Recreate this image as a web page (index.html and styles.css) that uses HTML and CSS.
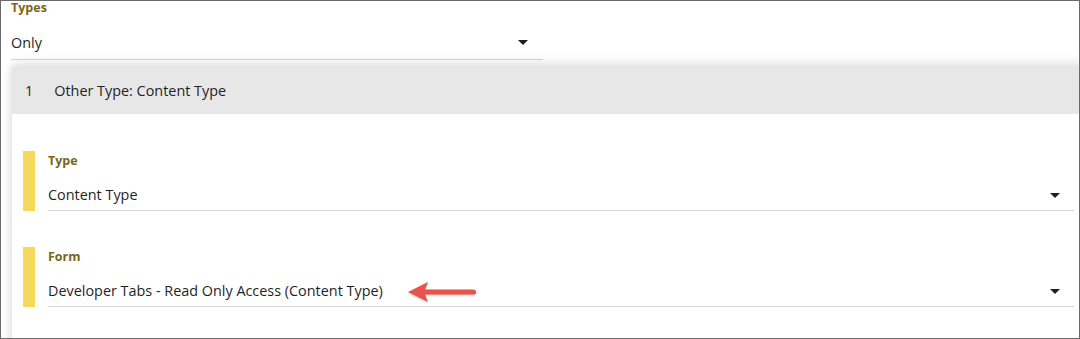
FILE: index.html
```html
<!DOCTYPE html>
<html lang="en">
<head>
<meta charset="utf-8">
<title>Types</title>
<link rel="stylesheet" href="styles.css">
</head>
<body>
<div class="frame">
  <div class="top-field">
    <div class="label">Types</div>
    <div class="value-row top-value">
      <span class="value">Only</span>
      <span class="caret"></span>
    </div>
  </div>

  <div class="card">
    <div class="card-header">
      <span class="num">1</span>
      <span class="title">Other Type: Content Type</span>
    </div>
    <div class="card-body">
      <div class="field">
        <div class="bar"></div>
        <div class="field-content">
          <div class="label">Type</div>
          <div class="value-row">
            <span class="value">Content Type</span>
            <span class="caret"></span>
          </div>
        </div>
      </div>
      <div class="field">
        <div class="bar"></div>
        <div class="field-content">
          <div class="label">Form</div>
          <div class="value-row">
            <span class="value">Developer Tabs - Read Only Access (Content Type)</span>
            <svg class="callout" width="72" height="24" viewBox="0 0 72 24" aria-hidden="true">
              <path d="M2 12 L22 2 L19 9.4 L67 9.4 Q70 9.4 70 12 Q70 14.6 67 14.6 L19 14.6 L22 22 Z" fill="#e9544a"/>
            </svg>
            <span class="caret"></span>
          </div>
        </div>
      </div>
    </div>
  </div>
</div>
</body>
</html>
```

FILE: styles.css
```css
* {
  box-sizing: border-box;
}

html, body {
  margin: 0;
  padding: 0;
  background: #ffffff;
}

body {
  font-family: "Open Sans", "Noto Sans", "Liberation Sans", sans-serif;
  color: #1f1f1f;
}

.frame {
  width: 1080px;
  height: 339px;
  border: 1px solid #6a6a6a;
  overflow: hidden;
  padding: 0 0 0 10px;
  background: #ffffff;
}

.label {
  font-size: 12.5px;
  font-weight: 700;
  line-height: 16px;
  color: #7a6616;
}

.top-field {
  width: 532px;
}

.top-field .label {
  line-height: 14px;
}

.value-row {
  display: flex;
  align-items: center;
  height: 27px;
  padding: 0 14px 7px 0;
  border-bottom: 1px solid #d4d4d4;
}

.top-value {
  margin-top: 18px;
  padding-right: 15px;
  height: 27px;
}

.value {
  font-size: 14.4px;
  line-height: 20px;
  white-space: nowrap;
}

.caret {
  margin-left: auto;
  width: 0;
  height: 0;
  border-left: 5px solid transparent;
  border-right: 5px solid transparent;
  border-top: 5px solid #1e1e1e;
}

.callout {
  margin-left: 23px;
  margin-top: 1px;
  filter: drop-shadow(0 1px 1px rgba(0, 0, 0, 0.25));
}

.card {
  width: 1073px;
  margin: 7px 0 0 1px;
  background: #ffffff;
  box-shadow: 0 0 10px rgba(0, 0, 0, 0.14), 0 -6px 14px rgba(0, 0, 0, 0.05);
  height: 300px;
}

.card-header {
  display: flex;
  align-items: center;
  height: 47px;
  padding: 1px 0 0 13px;
  background: #e8e7e8;
  font-size: 14.4px;
  line-height: 20px;
}

.num {
  min-width: 8px;
  margin-right: 21px;
}

.card-body {
  padding: 37px 11px 0 11px;
  display: flex;
  flex-direction: column;
  gap: 36px;
}

.field {
  display: flex;
  gap: 13px;
}

.bar {
  width: 12px;
  flex: none;
  background: #f6d95b;
}

.field-content {
  flex: 1;
  padding-top: 2px;
}

.field-content .value-row {
  margin-top: 16px;
  height: 26px;
  padding-bottom: 5px;
}
```
